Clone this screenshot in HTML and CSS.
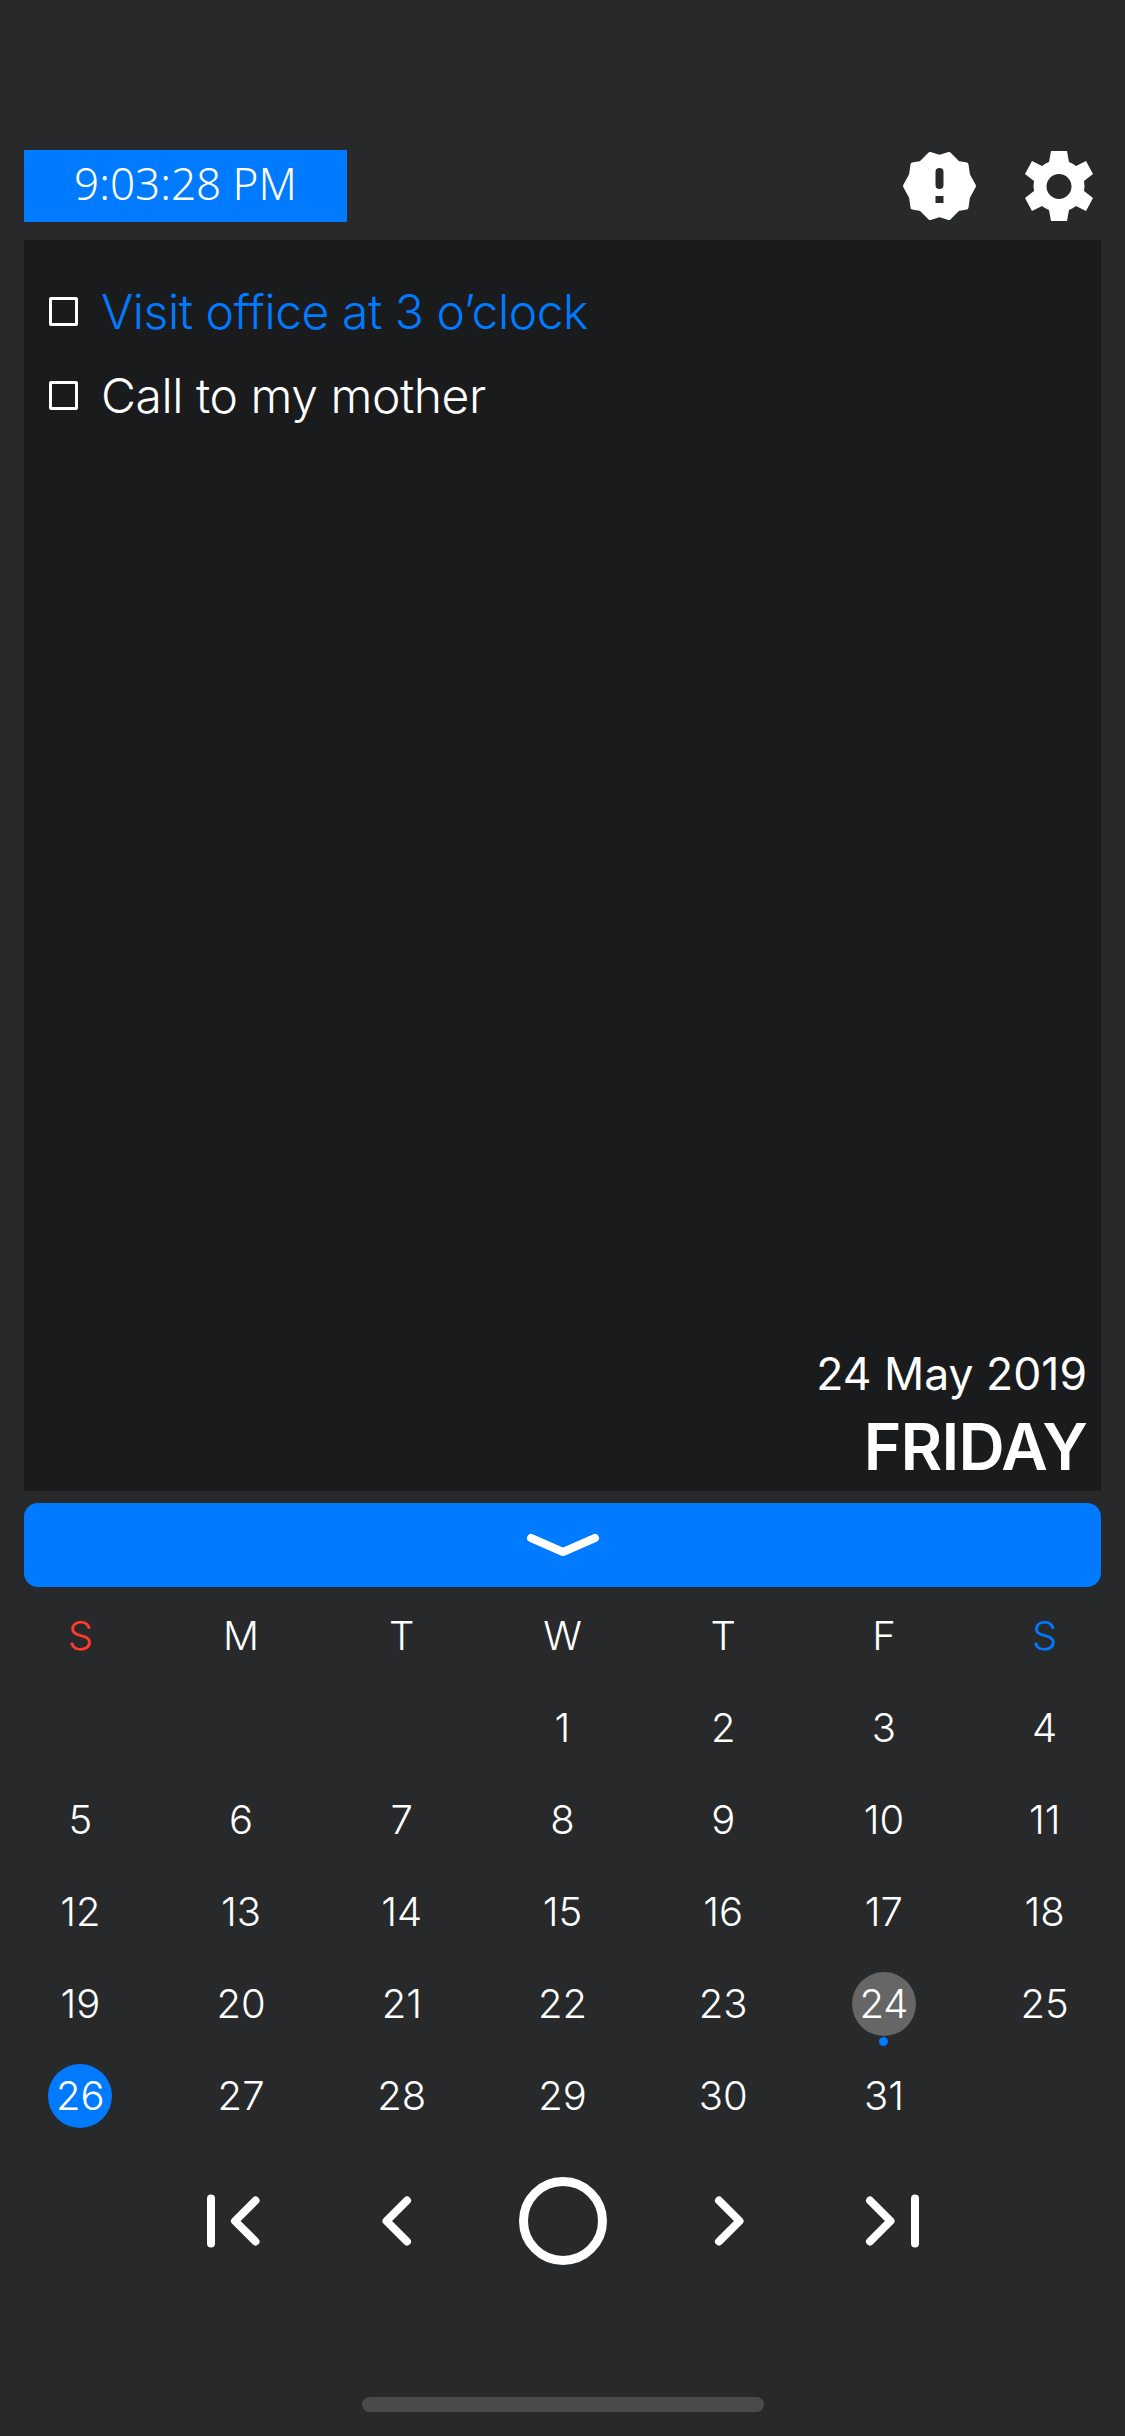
FILE: index.html
```html
<!DOCTYPE html>
<html>
<head>
  <title>Calendar</title>
  <link rel="stylesheet" href="styles.css">
</head>
<body>
  <div class="topbar">
    <div class="clock">9:03:28 PM</div>
    <div class="top-icons">
      <svg class="alert-icon" viewBox="0 0 75 72">
        <path fill="#fff" stroke="#fff" stroke-width="4" stroke-linejoin="round" d="M28 4 L37.500 7 L47 4 L56 13 L64.500 14.500 L66 25 L72 36 L66 47 L64.500 57.500 L56 59 L47 68 L37.500 65 L28 68 L19 59 L10.500 57.500 L9 47 L3 36 L9 25 L10.500 14.500 L19 13 Z"/>
        <path fill="#27292b" d="M37.500 18 Q33.500 18 33.500 22 L33.500 35 Q33.500 39 37.500 39 Q41.500 39 41.500 35 L41.500 22 Q41.500 18 37.500 18 Z M33.500 46 L33.500 53 L41.500 53 L41.500 46 Z"/>
      </svg>
      <svg class="gear-icon" viewBox="0 0 68 72">
        <path fill="#fff" fill-rule="evenodd" d="M26 1 L42 1 L44 12 Q48 13.500 51 16 L61 11 L68 24 L59 31 Q60 36 59 41 L68 48 L61 61 L51 56 Q48 58.500 44 60 L42 71 L26 71 L24 60 Q20 58.500 17 56 L7 61 L0 48 L9 41 Q8 36 9 31 L0 24 L7 11 L17 16 Q20 13.500 24 12 Z M34 24 A12.500 12.500 0 1 0 34 49 A12.500 12.500 0 1 0 34 24 Z"/>
      </svg>
    </div>
  </div>

  <div class="notes">
    <div class="todo-list">
      <div class="todo todo-active"><span class="checkbox"></span>Visit office at 3 o’clock</div>
      <div class="todo"><span class="checkbox"></span>Call to my mother</div>
    </div>
    <div class="date-info">
      <div class="date-line">24 May 2019</div>
      <div class="weekday">FRIDAY</div>
    </div>
  </div>

  <div class="collapse-btn">
    <svg class="collapse-icon" viewBox="0 0 74 24" stroke="#fff" stroke-width="8" stroke-linecap="round" stroke-linejoin="round" fill="none">
      <path d="M5 5 L37 19 L69 5"/>
    </svg>
  </div>

  <div class="calendar">
    <div class="cell cell-sun">S</div>
    <div class="cell">M</div>
    <div class="cell">T</div>
    <div class="cell">W</div>
    <div class="cell">T</div>
    <div class="cell">F</div>
    <div class="cell cell-sat">S</div>

    <div class="cell"></div>
    <div class="cell"></div>
    <div class="cell"></div>
    <div class="cell">1</div>
    <div class="cell">2</div>
    <div class="cell">3</div>
    <div class="cell">4</div>

    <div class="cell">5</div>
    <div class="cell">6</div>
    <div class="cell">7</div>
    <div class="cell">8</div>
    <div class="cell">9</div>
    <div class="cell">10</div>
    <div class="cell">11</div>

    <div class="cell">12</div>
    <div class="cell">13</div>
    <div class="cell">14</div>
    <div class="cell">15</div>
    <div class="cell">16</div>
    <div class="cell">17</div>
    <div class="cell">18</div>

    <div class="cell">19</div>
    <div class="cell">20</div>
    <div class="cell">21</div>
    <div class="cell">22</div>
    <div class="cell">23</div>
    <div class="cell"><span class="day-mark day-selected">24</span><span class="event-dot"></span></div>
    <div class="cell">25</div>

    <div class="cell"><span class="day-mark day-today">26</span></div>
    <div class="cell">27</div>
    <div class="cell">28</div>
    <div class="cell">29</div>
    <div class="cell">30</div>
    <div class="cell">31</div>
    <div class="cell"></div>
  </div>

  <div class="nav">
    <svg class="nav-icon" viewBox="0 0 60 60" stroke="#fff" stroke-width="8" stroke-linecap="round" stroke-linejoin="round" fill="none">
      <path d="M8 7.500 L8 52.500"/>
      <path d="M52.500 9.500 L32 30 L52.500 50.500"/>
    </svg>
    <svg class="nav-icon" viewBox="0 0 60 60" stroke="#fff" stroke-width="8" stroke-linecap="round" stroke-linejoin="round" fill="none">
      <path d="M39 9.500 L18.500 30 L39 50.500"/>
    </svg>
    <div class="home-ring"></div>
    <svg class="nav-icon" viewBox="0 0 60 60" stroke="#fff" stroke-width="8" stroke-linecap="round" stroke-linejoin="round" fill="none">
      <path d="M21 9.500 L41.500 30 L21 50.500"/>
    </svg>
    <svg class="nav-icon" viewBox="0 0 60 60" stroke="#fff" stroke-width="8" stroke-linecap="round" stroke-linejoin="round" fill="none">
      <path d="M7 9.500 L27.500 30 L7 50.500"/>
      <path d="M52 7.500 L52 52.500"/>
    </svg>
  </div>

  <div class="home-indicator"></div>
</body>
</html>
```

FILE: styles.css
```css
body {
  margin: 0;
  width: 1125px;
  height: 2436px;
  overflow: hidden;
  background-color: #27292b;
  color: #fff;
  font-family: Inter, "Liberation Sans", sans-serif;
}

.topbar {
  display: flex;
  justify-content: space-between;
  align-items: center;
  padding: 150px 32px 0 24px;
}

.clock {
  width: 323px;
  height: 72px;
  line-height: 66px;
  background-color: #007aff;
  font-family: "Noto Sans", sans-serif;
  font-size: 44px;
  font-weight: 300;
  text-align: center;
}

.top-icons {
  display: flex;
  align-items: center;
  gap: 48px;
}

.alert-icon {
  width: 75px;
  height: 72px;
}

.gear-icon {
  width: 68px;
  height: 72px;
}

.notes {
  display: flex;
  flex-direction: column;
  justify-content: space-between;
  box-sizing: border-box;
  height: 1251px;
  margin: 18px 24px 0;
  padding: 29px 14px 5px 25px;
  background-color: #191b1d;
}

.todo {
  display: flex;
  align-items: center;
  height: 84px;
  font-size: 48px;
  font-weight: 300;
  letter-spacing: -0.45px;
}

.todo-active {
  color: #007aff;
}

.checkbox {
  box-sizing: border-box;
  width: 29px;
  height: 29px;
  margin-right: 23px;
  border: 3px solid #fff;
  border-radius: 2px;
}

.date-info {
  text-align: right;
}

.date-line {
  font-size: 44.500px;
  line-height: 68px;
}

.weekday {
  font-size: 64px;
  font-weight: 600;
  letter-spacing: -0.8px;
  line-height: 78px;
}

.collapse-btn {
  display: flex;
  justify-content: center;
  align-items: center;
  height: 84px;
  margin: 12px 24px 0;
  background-color: #007aff;
  border-radius: 14px;
}

.collapse-icon {
  width: 74px;
  height: 24px;
}

.calendar {
  display: grid;
  grid-template-columns: repeat(7, 1fr);
  grid-auto-rows: 92px;
  margin-top: 3px;
  font-size: 40px;
  font-weight: 300;
}

.cell {
  position: relative;
  display: flex;
  justify-content: center;
  align-items: center;
  box-sizing: border-box;
  padding-bottom: 2px;
}

.cell-sun {
  color: #ff3b30;
}

.cell-sat {
  color: #007aff;
}

.day-mark {
  display: flex;
  justify-content: center;
  align-items: center;
  box-sizing: border-box;
  width: 64px;
  height: 64px;
  margin-top: 2px;
  padding-bottom: 2px;
  border-radius: 50%;
}

.day-selected {
  background-color: #666;
}

.day-today {
  background-color: #007aff;
}

.event-dot {
  position: absolute;
  left: 50%;
  top: 79px;
  width: 9px;
  height: 9px;
  margin-left: -4.500px;
  background-color: #007aff;
  border-radius: 50%;
}

.nav {
  display: grid;
  grid-template-columns: repeat(5, 165px);
  justify-content: center;
  justify-items: center;
  align-items: center;
  margin-top: 35px;
}

.nav-icon {
  width: 60px;
  height: 60px;
}

.home-ring {
  box-sizing: border-box;
  width: 88px;
  height: 88px;
  border: 9px solid #fff;
  border-radius: 50%;
}

.home-indicator {
  width: 402px;
  height: 15px;
  margin: 132px auto 0;
  background-color: #4a4a4a;
  border-radius: 8px;
}
```
